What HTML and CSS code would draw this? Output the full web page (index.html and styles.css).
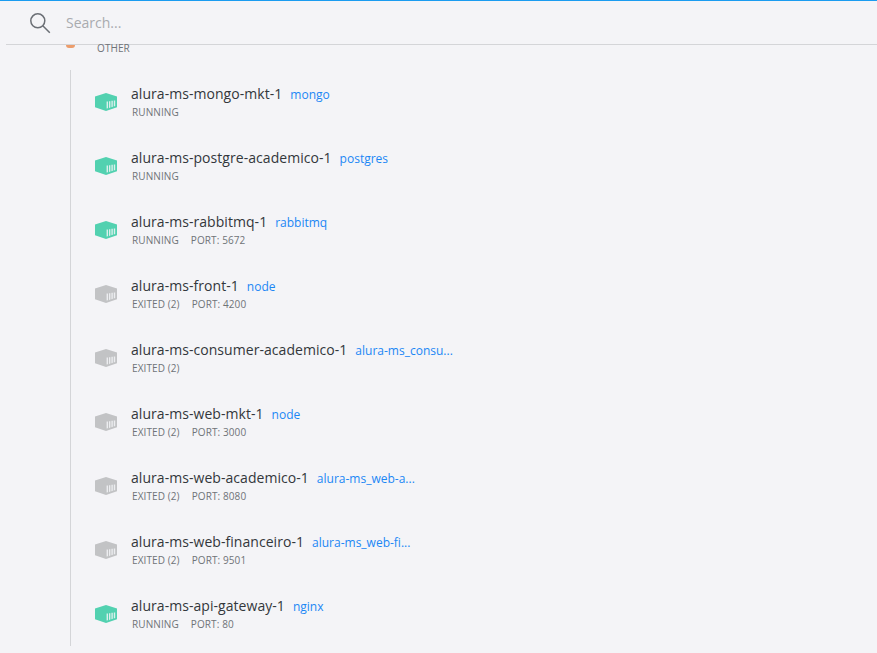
FILE: index.html
```html
<!DOCTYPE html>
<html lang="en">
<head>
<meta charset="utf-8">
<title>Containers</title>
<link rel="stylesheet" href="styles.css">
</head>
<body>
<svg class="defs" width="0" height="0" aria-hidden="true">
  <symbol id="box" viewBox="0 0 22 18">
    <path fill="currentColor" d="M11 0 22 3.6V14.2L11 18 0 14.2V3.6Z"/>
    <path fill="#f3f4f7" opacity=".85" d="M11.6 8.6h1.4v6.6l-1.4.4ZM14 8.2h1.4v6.3l-1.4.5ZM16.4 7.8h1.4v5.9l-1.4.5ZM18.8 7.4h1.4v5.6l-1.4.5Z"/>
  </symbol>
</svg>
<header class="search">
  <svg class="search-icon" width="22" height="22" viewBox="0 0 22 22" fill="none" stroke="#6b6f75" stroke-width="1.5">
    <circle cx="8.8" cy="8.8" r="7"/>
    <path d="M13.8 13.8 20.8 20.8"/>
  </svg>
  <span class="placeholder">Search...</span>
</header>
<main class="content">
  <div class="group">
    <span class="group-icon"></span>
    <span class="group-label">OTHER</span>
  </div>
  <ul class="list">
    <li class="row"><svg class="icon run"><use href="#box"/></svg><div><p class="title"><span class="name">alura-ms-mongo-mkt-1</span><span class="image">mongo</span></p><p class="meta"><span>RUNNING</span></p></div></li>
    <li class="row"><svg class="icon run"><use href="#box"/></svg><div><p class="title"><span class="name">alura-ms-postgre-academico-1</span><span class="image">postgres</span></p><p class="meta"><span>RUNNING</span></p></div></li>
    <li class="row"><svg class="icon run"><use href="#box"/></svg><div><p class="title"><span class="name">alura-ms-rabbitmq-1</span><span class="image">rabbitmq</span></p><p class="meta"><span>RUNNING</span><span>PORT: 5672</span></p></div></li>
    <li class="row"><svg class="icon off"><use href="#box"/></svg><div><p class="title"><span class="name">alura-ms-front-1</span><span class="image">node</span></p><p class="meta"><span>EXITED (2)</span><span>PORT: 4200</span></p></div></li>
    <li class="row"><svg class="icon off"><use href="#box"/></svg><div><p class="title"><span class="name">alura-ms-consumer-academico-1</span><span class="image">alura-ms_consu...</span></p><p class="meta"><span>EXITED (2)</span></p></div></li>
    <li class="row"><svg class="icon off"><use href="#box"/></svg><div><p class="title"><span class="name">alura-ms-web-mkt-1</span><span class="image">node</span></p><p class="meta"><span>EXITED (2)</span><span>PORT: 3000</span></p></div></li>
    <li class="row"><svg class="icon off"><use href="#box"/></svg><div><p class="title"><span class="name">alura-ms-web-academico-1</span><span class="image">alura-ms_web-a...</span></p><p class="meta"><span>EXITED (2)</span><span>PORT: 8080</span></p></div></li>
    <li class="row"><svg class="icon off"><use href="#box"/></svg><div><p class="title"><span class="name">alura-ms-web-financeiro-1</span><span class="image">alura-ms_web-fi...</span></p><p class="meta"><span>EXITED (2)</span><span>PORT: 9501</span></p></div></li>
    <li class="row"><svg class="icon run"><use href="#box"/></svg><div><p class="title"><span class="name">alura-ms-api-gateway-1</span><span class="image">nginx</span></p><p class="meta"><span>RUNNING</span><span>PORT: 80</span></p></div></li>
  </ul>
</main>
</body>
</html>
```
FILE: styles.css
```css
* { box-sizing: border-box; }
html, body { height: 100%; }
body {
  margin: 0;
  background: #f4f4f7;
  font-family: "Open Sans", sans-serif;
  overflow: hidden;
  border-top: 1px solid #1a9cf0;
}
.defs { position: absolute; }
.search {
  height: 44px;
  margin-left: 6px;
  padding-left: 23px;
  display: flex;
  align-items: center;
  gap: 15px;
  border-bottom: 1px solid #d4d5d8;
}
.placeholder { font-size: 14px; color: #a9abaf; }
.content { height: 608px; }
.group {
  height: 25px;
  padding-left: 66px;
  display: flex;
  align-items: flex-start;
  gap: 22px;
}
.group-icon {
  width: 9px;
  height: 3px;
  background: #ec9d6c;
  border-radius: 0 0 5px 5px;
}
.group-label { font-size: 10px; line-height: 6px; color: #6f7378; letter-spacing: .1px; }
.list {
  list-style: none;
  margin: 0 0 0 70px;
  padding: 0 0 0 24px;
  border-left: 1px solid #d4d5d8;
}
.row {
  height: 64px;
  display: flex;
  align-items: center;
  gap: 14px;
}
.icon { width: 22px; height: 18px; flex: none; }
.run { color: #52d1b0; }
.off { color: #c2c3c5; }
.title { margin: 0; display: flex; align-items: baseline; gap: 8px; height: 20px; line-height: 20px; }
.name { font-size: 14px; color: #33373b; letter-spacing: .05px; }
.image { font-size: 12px; color: #1b87f5; }
.meta { margin: 0; padding-left: 1px; display: flex; gap: 12px; font-size: 10px; line-height: 16px; color: #6f7378; letter-spacing: .1px; }
```
